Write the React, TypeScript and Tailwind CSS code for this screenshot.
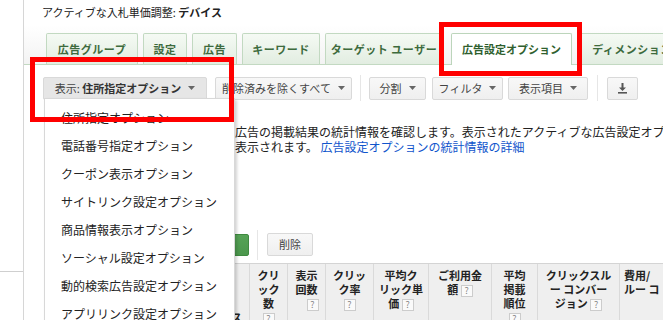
import React from "react";

const tabs = [
  { label: "広告グループ", w: "w-[92px]" },
  { label: "設定", w: "w-[44px]" },
  { label: "広告", w: "w-[45px]" },
  { label: "キーワード", w: "w-[78px]" },
  { label: "ターゲット ユーザー", w: "w-[118px]" },
  { label: "広告設定オプション", w: "w-[121px]", active: true },
  { label: "ディメンション", w: "w-[110px]" },
];

const menuItems = [
  "住所指定オプション",
  "電話番号指定オプション",
  "クーポン表示オプション",
  "サイトリンク設定オプション",
  "商品情報表示オプション",
  "ソーシャル設定オプション",
  "動的検索広告設定オプション",
  "アプリリンク設定オプション",
];

function Caret() {
  return (
    <svg width="7" height="4" viewBox="0 0 7 4" className="shrink-0">
      <path d="M0 0h7L3.5 4z" fill="#666" />
    </svg>
  );
}

function Help() {
  return (
    <span className="inline-block w-[12px] h-[12px] border border-[#cccccc] bg-[#fafafa] text-[9px] leading-[10px] text-center font-normal text-[#888] align-middle">
      ?
    </span>
  );
}

function ToolButton({
  w,
  children,
  open = false,
  caret = true,
}: {
  w: string;
  children: React.ReactNode;
  open?: boolean;
  caret?: boolean;
}) {
  return (
    <div
      className={`h-[23px] ${w} shrink-0 flex items-center justify-center gap-[7px] rounded-[2px] border border-[#d9d9d9] text-[11px] text-[#444] ${
        open ? "bg-[#e6e6e6]" : "bg-gradient-to-b from-[#f8f8f8] to-[#efefef]"
      }`}
    >
      {children}
      {caret && <Caret />}
    </div>
  );
}

function HeadCell({ w, children, align = "text-center" }: { w: string; children: React.ReactNode; align?: string }) {
  return (
    <div className={`${w} shrink-0 border-r border-[#dadada] pt-[4px] px-[4px] ${align} text-[11px] leading-[14px] font-bold text-[#222] whitespace-nowrap overflow-hidden`}>
      {children}
    </div>
  );
}

export default function App() {
  return (
    <div className="w-[663px] h-[320px] overflow-hidden bg-white flex font-['Noto_Sans_CJK_JP','Noto_Sans',sans-serif] text-[#222]">
      {/* left gutter */}
      <div className="w-[24px] shrink-0 border-r border-[#d6d6d6] flex flex-col">
        <div className="h-[271px]" />
        <div className="border-t border-[#cfcfcf]" />
      </div>

      <div className="relative flex-1 min-w-0 overflow-hidden">
        {/* title */}
        <div className="h-[25px] pl-[18px] flex items-center text-[11px] whitespace-nowrap">
          アクティブな入札単価調整:&nbsp;<b>デバイス</b>
        </div>

        {/* tabs */}
        <div className="h-[40px] flex items-end gap-[5px] pl-[22px] border-b border-[#c3d9c2] bg-gradient-to-b from-white to-[#f3f3f3]">
          {tabs.map((t) =>
            t.active ? (
              <div
                key={t.label}
                className={`${t.w} shrink-0 h-[32px] -mb-[1px] ml-[3px] relative z-10 flex items-center justify-center border border-b-0 border-[#bcd5bb] rounded-t-[2px] bg-white text-[11px] font-bold text-[#2f5f2f] whitespace-nowrap`}
              >
                {t.label}
              </div>
            ) : (
              <div
                key={t.label}
                className={`${t.w} shrink-0 h-[31px] flex items-center justify-center border border-b-0 border-[#c2d9c1] rounded-t-[2px] bg-gradient-to-b from-[#f5faf4] to-[#e2ede1] text-[11px] font-bold tracking-[0.5px] text-[#3d6b3d] whitespace-nowrap`}
              >
                {t.label}
              </div>
            )
          )}
        </div>

        {/* toolbar */}
        <div className="mt-[10px] flex items-center pl-[19px] whitespace-nowrap">
          <ToolButton w="w-[164px]" open>
            <span>
              表示: <b className="text-[#333]">住所指定オプション</b>
            </span>
          </ToolButton>
          <div className="ml-[8px]">
            <ToolButton w="w-[137px]">削除済みを除くすべて</ToolButton>
          </div>
          <div className="ml-[8px] w-px h-[26px] bg-[#e6e6e6]" />
          <div className="ml-[8px]">
            <ToolButton w="w-[57px]">分割</ToolButton>
          </div>
          <div className="ml-[6px]">
            <ToolButton w="w-[71px]">フィルタ</ToolButton>
          </div>
          <div className="ml-[5px]">
            <ToolButton w="w-[80px]">表示項目</ToolButton>
          </div>
          <div className="ml-[9px] w-px h-[26px] bg-[#e6e6e6]" />
          <div className="ml-[9px]">
            <ToolButton w="w-[31px]" caret={false}>
              <svg width="11" height="11" viewBox="0 0 11 11">
                <path d="M4.5 0h2v4.5H9L5.5 8 2 4.5h2.5z" fill="#555" />
                <rect x="1" y="9" width="9" height="1.6" fill="#555" />
              </svg>
            </ToolButton>
          </div>
        </div>

        {/* description */}
        <div className="mt-[23px] pl-[211px] text-[12px] leading-[15px] whitespace-nowrap">
          <div>広告の掲載結果の統計情報を確認します。表示されたアクティブな広告設定オプ</div>
          <div>
            表示されます。 <span className="text-[#1155cc]">広告設定オプションの統計情報の詳細</span>
          </div>
        </div>

        {/* action row */}
        <div className="mt-[79px] h-[23px] flex items-end pl-[20px]">
          <div className="w-[205px] h-[22px] rounded-[2px] border border-[#3f8a40] bg-gradient-to-b from-[#56a356] to-[#4b974c]" />
          <div className="ml-[8px] self-center w-px h-[30px] bg-[#e6e6e6]" />
          <div className="ml-[9px] h-[23px] w-[46px] rounded-[2px] border border-[#d9d9d9] bg-gradient-to-b from-[#f8f8f8] to-[#efefef] text-[11px] text-[#444] flex items-center justify-center">
            削除
          </div>
        </div>

        {/* table header */}
        <div className="mt-[7px] ml-[20px] h-[80px] flex border-t border-[#d4d4d4] bg-[#efefef]">
          <div className="w-[206px] shrink-0 border-r border-[#dadada] pt-[46px] pr-[7px] text-right text-[11px] leading-[14px] font-bold">
            ス
          </div>
          <HeadCell w="w-[38px]">
            クリ
            <br />
            ック
            <br />
            数
            <br />
            <Help />
          </HeadCell>
          <HeadCell w="w-[38px]">
            表示
            <br />
            回数
            <br />
            <span className="pl-[12px]">
              <Help />
            </span>
          </HeadCell>
          <HeadCell w="w-[48px]">
            クリッ
            <br />
            ク率
            <br />
            <Help />
          </HeadCell>
          <HeadCell w="w-[55px]">
            平均ク
            <br />
            リック単
            <br />
            価 <Help />
          </HeadCell>
          <HeadCell w="w-[63px]">
            ご利用金
            <br />
            額 <Help />
          </HeadCell>
          <HeadCell w="w-[46px]">
            平均
            <br />
            掲載
            <br />
            順位
            <br />
            <Help />
          </HeadCell>
          <HeadCell w="w-[82px]">
            クリックスル
            <br />
            ー コンバー
            <br />
            ジョン <Help />
          </HeadCell>
          <HeadCell w="w-[120px]" align="text-left pl-[4px]">
            費用/
            <br />
            ルー コ
          </HeadCell>
        </div>

        {/* dropdown menu */}
        <div className="absolute left-[20px] top-[98px] z-20 w-[191px] h-[240px] bg-white border border-[#d8d8d8] shadow-[2px_2px_3px_rgba(0,0,0,0.18)] pt-[5px]">
          {menuItems.map((m) => (
            <div key={m} className="h-[28px] flex items-center pl-[16px] text-[12px] text-[#222] whitespace-nowrap">
              {m}
            </div>
          ))}
        </div>

        {/* annotation boxes */}
        <div className="absolute z-30 left-[6px] top-[57px] w-[204px] h-[65px] border-[5px] border-[#ff0000]" />
        <div className="absolute z-30 left-[415px] top-[22px] w-[143px] h-[54px] border-[5px] border-[#ff0000]" />
      </div>
    </div>
  );
}
